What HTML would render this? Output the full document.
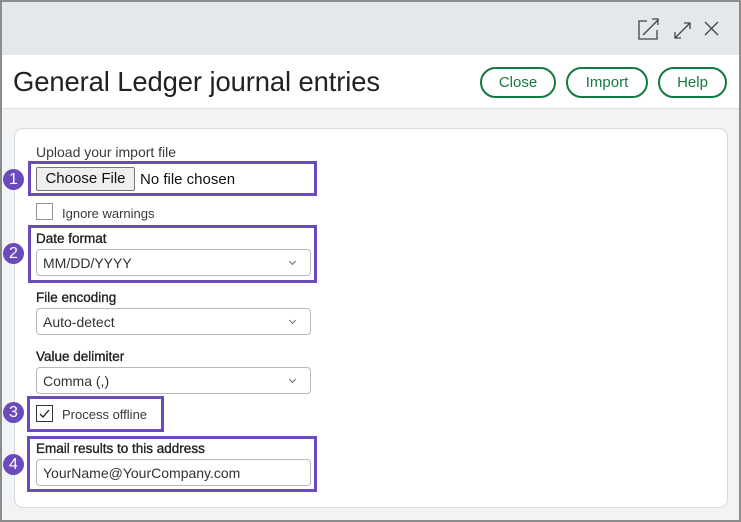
<!DOCTYPE html>
<html><head><style>
*{box-sizing:border-box;margin:0;padding:0}
body{width:741px;height:522px;overflow:hidden;font-family:"Liberation Sans",Arial,sans-serif;background:#8c8c8c;position:relative}
.a{position:absolute}
#win{left:2px;top:2px;width:737px;height:518px;background:#f1f3f4;overflow:hidden}
#hdr{left:0;top:0;width:737px;height:53px;background:#e3e8eb}
#tb{left:0;top:53px;width:737px;height:54px;background:#fff;border-bottom:1px solid #dde1e4}
.title{left:11px;top:64px;font-size:27.4px;color:#222;letter-spacing:-0.1px}
.btn{height:31px;border:2px solid #137a3f;border-radius:16px;color:#137a3f;font-size:15px;text-align:center;line-height:27px;background:#fff}
#card{left:12px;top:126px;width:714px;height:380px;background:#fff;border:1px solid #d6dbdf;border-radius:9px}
.lbl{font-size:14px;color:#393a3d}
.blbl{font-size:13.5px;color:#222;-webkit-text-stroke:0.35px #222}
.sel{width:275px;height:27px;border:1px solid #b5bac0;border-radius:4px;background:#fff;font-size:14px;color:#333;padding:5px 0 0 6px}
.dd:after{content:"";position:absolute;right:15px;top:9px;width:4px;height:4px;border-right:1px solid #666;border-bottom:1px solid #666;transform:rotate(45deg)}
.box{border:3px solid #6b4bbc}
.c{width:21px;height:21px;border-radius:50%;background:#6b4bbc;color:#fff;font-size:16px;text-align:center;line-height:21px}
.cb{width:17px;height:17px;border:1px solid #8d9096;background:#fff}
</style></head><body>
<div id="win" class="a">
<div id="hdr" class="a">
<svg class="a" style="left:633px;top:14px" width="100" height="26" viewBox="0 0 100 26">
<g fill="none" stroke="#444" stroke-width="1.3">
<path d="M12 5H4v18h18v-9"/><path d="M8 19L23 4M17 3h6v6"/>
<path d="M40 22L55 7M40 16v6h6M55 13V7h-6"/>
<path d="M70 6l13 13M83 6L70 19"/></g></svg>
</div>
<div id="tb" class="a"></div>
<div class="a title">General Ledger journal entries</div>
<div class="a btn" style="left:478px;top:65px;width:76px">Close</div>
<div class="a btn" style="left:564px;top:65px;width:82px">Import</div>
<div class="a btn" style="left:656px;top:65px;width:69px">Help</div>
<div id="card" class="a"></div>
</div>
<div class="a lbl" style="left:36px;top:144px">Upload your import file</div>
<div class="a box" style="left:28px;top:161px;width:289px;height:35px"></div>
<div class="a" style="left:36px;top:167px;width:99px;height:24px;background:#efefef;border:1px solid #767676;border-radius:2px;font-size:15px;color:#111;text-align:center;line-height:22px">Choose File</div>
<div class="a" style="left:140px;top:171px;font-size:15px;color:#111">No file chosen</div>
<div class="a c" style="left:3px;top:169px">1</div>
<div class="a cb" style="left:36px;top:203px"></div>
<div class="a lbl" style="left:62px;top:206px;font-size:13px">Ignore warnings</div>
<div class="a box" style="left:28px;top:225px;width:289px;height:58px"></div>
<div class="a c" style="left:3px;top:243px">2</div>
<div class="a blbl" style="left:36px;top:231px">Date format</div>
<div class="a sel dd" style="left:36px;top:249px">MM/DD/YYYY</div>
<div class="a blbl" style="left:36px;top:290px">File encoding</div>
<div class="a sel dd" style="left:36px;top:308px">Auto-detect</div>
<div class="a blbl" style="left:36px;top:349px">Value delimiter</div>
<div class="a sel dd" style="left:36px;top:367px">Comma (,)</div>
<div class="a box" style="left:27px;top:396px;width:137px;height:36px"></div>
<div class="a c" style="left:3px;top:402px">3</div>
<div class="a cb" style="left:36px;top:405px;border-color:#333"><svg width="15" height="15"><path d="M3 8l3 3 6-7" fill="none" stroke="#222" stroke-width="1.3"/></svg></div>
<div class="a lbl" style="left:62px;top:407px;font-size:13px">Process offline</div>
<div class="a box" style="left:27px;top:436px;width:290px;height:56px"></div>
<div class="a c" style="left:3px;top:454px">4</div>
<div class="a blbl" style="left:36px;top:441px">Email results to this address</div>
<div class="a sel" style="left:36px;top:459px;height:27px">YourName@YourCompany.com</div>
</body></html>
